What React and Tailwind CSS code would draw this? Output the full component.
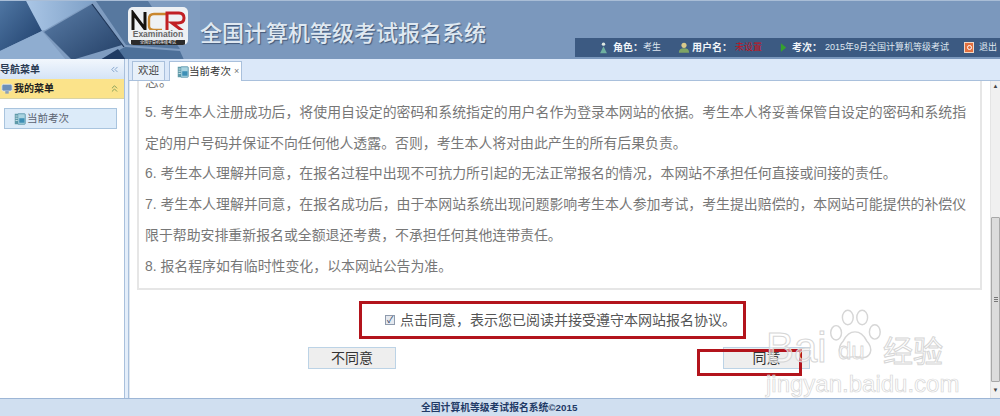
// App.jsx
import { ChevronsLeft, ChevronsUp } from 'lucide-react';

const cjk = "font-['Liberation_Sans','Noto_Sans_CJK_SC',sans-serif]";

function BookIcon({ className = '' }) {
  return (
    <svg viewBox="0 0 16 16" className={`w-[12px] h-[12px] shrink-0 ${className}`}>
      <rect x="1" y="1" width="5" height="14" fill="#5f9aa8" />
      <rect x="5" y="1" width="10" height="14" rx="1" fill="#a9d3e0" stroke="#4a8aa0" />
      <rect x="7" y="7" width="7" height="6" fill="#3d8fb5" />
      <path d="M2 4h3M2 7h3M2 10h3" stroke="#e6f4f8" />
    </svg>
  );
}

function HeaderArt() {
  return (
    <svg viewBox="0 0 200 59" className="w-[200px] h-[59px] shrink-0" preserveAspectRatio="none">
      <defs>
        <linearGradient id="tileA" x1="0" y1="0" x2="1" y2="1">
          <stop offset="0" stopColor="#4f76a3" />
          <stop offset="1" stopColor="#1f3f6b" />
        </linearGradient>
        <linearGradient id="tileB" x1="0" y1="0" x2="1" y2="1">
          <stop offset="0" stopColor="#5c7fa9" />
          <stop offset="1" stopColor="#233f66" />
        </linearGradient>
        <linearGradient id="tileC" x1="0" y1="0" x2="1" y2="0">
          <stop offset="0" stopColor="#aac6e6" />
          <stop offset="1" stopColor="#7d9fc6" />
        </linearGradient>
      </defs>
      <rect width="200" height="59" fill="#7f9cc0" />
      <polygon points="26,0 95,0 45,29 40,30" fill="url(#tileC)" />
      <polygon points="0,0 26,0 42,30 0,50" fill="url(#tileA)" />
      <polygon points="0,50 42,30 66,59 0,59" fill="#8fadd0" />
      <polygon points="44,31 92,3 122,44 72,59" fill="url(#tileB)" />
      <polygon points="96,0 148,0 180,48 126,44" fill="#57789f" />
      <polygon points="125,46 180,50 184,59 100,59" fill="#4d7099" />
      <polygon points="100,59 118,48 126,59" fill="#1f3b63" />
      <path d="M92 3 L124 46" stroke="#1c3355" strokeWidth="1.2" />
    </svg>
  );
}

function Logo() {
  return (
    <div className="w-[60px] h-[38px] bg-[#eef1f4] rounded-[5px] flex flex-col items-center overflow-hidden absolute left-[128px] top-[7px] pt-[3px]">
      <svg viewBox="0 0 56 20" className="w-[56px] h-[20px] shrink-0">
        <path d="M3 20V3l12 16V2" fill="none" stroke="#15120f" strokeWidth="3" />
        <path d="M36 4H24q-5 0-5 5v7q0 4 5 4h8" fill="none" stroke="#c9872e" strokeWidth="2.4" />
        <path d="M37 20V3h12q5 0 5 5 0 5-6 5h-6l12 9" fill="none" stroke="#c11f24" strokeWidth="3" />
      </svg>
      <span className="text-[8.5px] leading-[9px] font-bold text-[#666] font-['Liberation_Sans',sans-serif] whitespace-nowrap">Examination</span>
      <span className="mt-[1px] w-[54px] h-[5px] shrink-0 bg-[#2b2b2b] text-[4px] leading-[5px] text-center text-white font-['Noto_Sans_CJK_SC',sans-serif] whitespace-nowrap overflow-hidden">全国计算机等级考试</span>
    </div>
  );
}

function StatusBar() {
  return (
    <div className={`absolute right-0 top-[38px] w-[425px] h-[19px] bg-[#3c5a82] flex items-center text-[9px] text-[#dfe7f1] whitespace-nowrap ${cjk}`}>
      <svg viewBox="0 0 10 14" className="w-[9px] h-[12px] ml-[24px] shrink-0">
        <circle cx="5" cy="2.5" r="2" fill="#dfe8e2" />
        <path d="M5 5 1 13h8z" fill="#6fb0a0" />
      </svg>
      <b className="ml-[5px] text-[10px] text-[#f1f5f9]">角色：</b>
      <span>考生</span>
      <svg viewBox="0 0 14 12" className="w-[12px] h-[11px] ml-[17px] shrink-0">
        <circle cx="7" cy="3.5" r="3" fill="#d9c98a" />
        <path d="M1 12q0-5 6-5t6 5z" fill="#7fa565" />
      </svg>
      <b className="ml-[2px] text-[10px] text-[#f1f5f9]">用户名：</b>
      <span className="ml-[3px] text-[#c0131c]">未设置</span>
      <svg viewBox="0 0 8 12" className="w-[7px] h-[11px] ml-[18px] shrink-0">
        <path d="M1 1v10l6-5z" fill="#35a12e" />
      </svg>
      <b className="ml-[5px] text-[10px] text-[#f1f5f9]">考次：</b>
      <span className="ml-[3px]">2015年9月全国计算机等级考试</span>
      <span className="ml-[15px] w-[10px] h-[11px] shrink-0 bg-[#e2703f] border border-[#f3d7c4] flex items-center justify-center">
        <span className="w-[5px] h-[5px] rounded-full border border-white" />
      </span>
      <span className="ml-[5px]">退出</span>
    </div>
  );
}

function Sidebar() {
  return (
    <aside className={`w-[125px] shrink-0 flex flex-col bg-white border-r border-[#a9c0dc] ${cjk}`}>
      <div className="h-[20px] flex items-center justify-between pr-[4px] bg-gradient-to-b from-[#f2f7fd] to-[#d5e4f6] text-[10px] font-bold text-[#2a3a52] whitespace-nowrap">
        <span>导航菜单</span>
        <ChevronsLeft size={11} className="text-[#7c9fc8]" />
      </div>
      <div className="h-[20px] flex items-center justify-between pr-[4px] bg-[#fbe38a] border-b border-[#d8d3a6] text-[10px] font-bold text-[#222] whitespace-nowrap">
        <span className="flex items-center gap-[1px] pl-[1px]">
          <svg viewBox="0 0 14 12" className="w-[12px] h-[11px]">
            <rect x="1" y="1" width="12" height="8" rx="2" fill="#6d8fb8" stroke="#dfe8f2" />
            <rect x="5" y="9" width="4" height="3" fill="#8aa0ba" />
          </svg>
          我的菜单
        </span>
        <ChevronsUp size={11} className="text-[#7d9a55]" />
      </div>
      <div className="px-[4px] pt-[9px]">
        <div className="h-[21px] w-[113px] flex items-center pl-[9px] gap-[1px] bg-[#dcebf9] border border-[#a9c4de] text-[10.5px] text-[#5a6270] whitespace-nowrap">
          <BookIcon />
          当前考次
        </div>
      </div>
    </aside>
  );
}

function Tabs() {
  return (
    <div className={`h-[22px] bg-[#dbe8f9] border-b border-[#a9c0dc] flex items-end pl-[3px] gap-[4px] text-[10.5px] whitespace-nowrap ${cjk}`}>
      <div className="h-[19px] w-[33px] flex items-center justify-center bg-[#e7f0fa] border border-b-0 border-[#a9c0dc] text-[#444]">欢迎</div>
      <div className="h-[20px] -mb-[1px] w-[73px] flex items-center pl-[7px] bg-white border border-b-0 border-[#a9c0dc] text-[#333]">
        <BookIcon />
        当前考次
        <span className="ml-[3px] text-[9px] text-[#777]">×</span>
      </div>
    </div>
  );
}

function Agreement() {
  return (
    <div className={`mx-[7px] w-[845px] h-[209px] shrink-0 border-l-2 border-r-2 border-b-2 border-[#e6e6e6] overflow-hidden text-[13.9px] leading-[30.8px] text-[#777] ${cjk}`}>
      <div className="-mt-[15px] pl-[6px] w-[838px]">
        <p>志。</p>
        <p>5. 考生本人注册成功后，将使用自设定的密码和系统指定的用户名作为登录本网站的依据。考生本人将妥善保管自设定的密码和系统指定的用户号码并保证不向任何他人透露。否则，考生本人将对由此产生的所有后果负责。</p>
        <p>6. 考生本人理解并同意，在报名过程中出现不可抗力所引起的无法正常报名的情况，本网站不承担任何直接或间接的责任。</p>
        <p>7. 考生本人理解并同意，在报名成功后，由于本网站系统出现问题影响考生本人参加考试，考生提出赔偿的，本网站可能提供的补偿仪限于帮助安排重新报名或全额退还考费，不承担任何其他连带责任。</p>
        <p>8. 报名程序如有临时性变化，以本网站公告为准。</p>
      </div>
    </div>
  );
}

function Watermark() {
  return (
    <div className="absolute left-[764px] top-[308px] w-[200px] h-[90px] pointer-events-none">
      <svg viewBox="0 0 60 60" className="absolute left-[64px] top-[0px] w-[54px] h-[55px]" fill="none" stroke="#d6d6d6" strokeWidth="1.6">
        <ellipse cx="9" cy="27" rx="6" ry="8" />
        <ellipse cx="22" cy="10" rx="6" ry="8" />
        <ellipse cx="38" cy="10" rx="6" ry="8" />
        <ellipse cx="52" cy="26" rx="6" ry="8" />
        <path d="M30 26q-8 0-13 10-6 6-4 13 3 7 11 5 6-1 12 0 8 2 11-5 2-7-4-13-5-10-13-10z" />
      </svg>
      <span className="absolute left-[2px] top-[18px] text-[42px] leading-[44px] font-['Liberation_Sans',sans-serif] text-white/50 [-webkit-text-stroke:1px_#d6d6d6]">Bai</span>
      <span className="absolute left-[74px] top-[30px] text-[24px] leading-[26px] font-['Liberation_Sans',sans-serif] text-white/50 [-webkit-text-stroke:0.8px_#d6d6d6]">du</span>
      <span className="absolute left-[119px] top-[25px] text-[30px] leading-[32px] font-['Noto_Sans_CJK_SC',sans-serif] text-white/50 [-webkit-text-stroke:1px_#d6d6d6] whitespace-nowrap">经验</span>
      <span className="absolute left-[2px] top-[63px] text-[24px] leading-[26px] font-['Liberation_Sans',sans-serif] text-white/50 [-webkit-text-stroke:0.7px_#d6d6d6] whitespace-nowrap">jingyan.baidu.com</span>
    </div>
  );
}

function Scrollbar() {
  return (
    <div className="w-[10px] shrink-0 bg-[#f0f0f0] border-l border-[#e4e4e4] flex flex-col items-center relative">
      <span className="h-[8px] mt-[1px] text-[6px] leading-[8px] text-[#444]">▲</span>
      <div className="mt-[127px] w-full h-[165px] bg-[#dcdcdc] border border-[#a8a8a8] rounded-[1px] flex flex-col items-center justify-center gap-[1px]">
        <span className="w-[4px] h-px bg-[#777]" />
        <span className="w-[4px] h-px bg-[#777]" />
        <span className="w-[4px] h-px bg-[#777]" />
      </div>
      <span className="h-[8px] mt-[4px] text-[6px] leading-[8px] text-[#444]">▼</span>
    </div>
  );
}

export default function App() {
  return (
    <div className="w-[1000px] h-[416px] relative flex flex-col overflow-hidden bg-white">
      <header className="h-[59px] shrink-0 bg-[#7b98bd] border-t border-[#a9bdd6] flex">
        <HeaderArt />
        <h1 className="pt-[15px] text-[22px] leading-[30px] font-medium text-[#dfe8f1] whitespace-nowrap font-['Noto_Sans_CJK_SC',sans-serif] [text-shadow:1px_1px_1px_#44597a]">全国计算机等级考试报名系统</h1>
      </header>
      <Logo />
      <StatusBar />

      <div className="flex-1 min-h-0 flex">
        <Sidebar />
        <div className="w-[4px] shrink-0 bg-[#e4eefa] border-r border-[#a9c0dc]" />
        <main className="flex-1 min-w-0 flex flex-col">
          <Tabs />
          <div className="flex-1 min-h-0 flex">
            <div className="flex-1 min-w-0 flex flex-col border-l border-[#dfe6ee]">
              <Agreement />
              <div className={`flex-1 relative ${cjk}`}>
                <div className="ml-[229px] mt-[11px] w-[387px] h-[38px] border-[3px] border-[#b3141c] flex items-center pl-[23px] gap-[5px] text-[14px] text-[#555] whitespace-nowrap">
                  <span className="w-[10px] h-[10px] bg-[#e5e9ef] border border-[#8f9bad] text-[9px] leading-[8px] text-[#2b3f60] text-center">✓</span>
                  点击同意，表示您已阅读并接受遵守本网站报名协议。
                </div>
                <div className="mt-[8px] flex text-[14px] text-[#333]">
                  <button className="ml-[178px] w-[88px] h-[22px] bg-[#eeeeee] border border-[#bcd3e6]">不同意</button>
                  <button className="ml-[327px] w-[87px] h-[22px] bg-[#eeeeee] border border-[#bcd3e6]">同意</button>
                </div>
                <div className="absolute left-[567px] top-[59px] w-[105px] h-[27px] border-[3px] border-[#b3141c]" />
              </div>
            </div>
            <Scrollbar />
          </div>
        </main>
      </div>

      <footer className={`h-[18px] shrink-0 bg-[#d0dff0] border-t border-[#9db6d6] text-[9.8px] leading-[17px] font-bold text-[#1f3a66] pl-[421px] whitespace-nowrap ${cjk}`}>
        全国计算机等级考试报名系统©2015
      </footer>
      <Watermark />
    </div>
  );
}
